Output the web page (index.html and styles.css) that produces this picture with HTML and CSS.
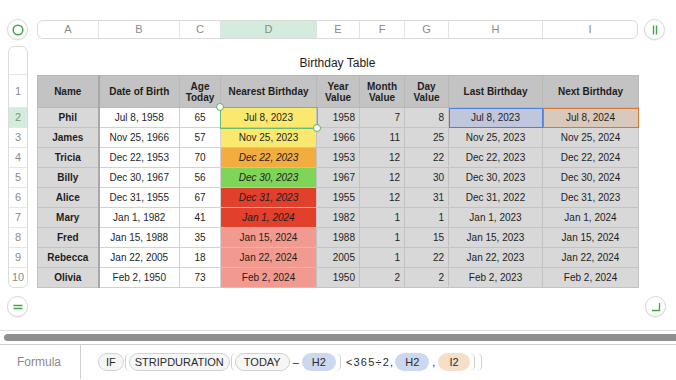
FILE: index.html
```html
<!DOCTYPE html>
<html>
<head>
<meta name="viewport" content="width=device-width, initial-scale=1">
<title>Birthday Table</title>
<link rel="stylesheet" href="styles.css">
</head>
<body>

<div class="topbar">
    <span class="knob">
        <svg width="12" height="12" viewBox="0 0 12 12"><circle cx="6" cy="6" r="4.8" fill="none" stroke="#3aa845" stroke-width="1.5"/></svg>
    </span>
    <div class="colbar">
        <div>A</div><div>B</div><div>C</div><div class="cur">D</div><div>E</div><div>F</div><div>G</div><div>H</div><div>I</div>
    </div>
    <span class="knob">
        <svg width="12" height="12" viewBox="0 0 12 12"><path d="M4.5 1.5v9M7.5 1.5v9" stroke="#3aa845" stroke-width="1.4"/></svg>
    </span>
</div>

<div class="main">
    <!-- row numbers -->
    <div class="rowhead">
        <div class="blank"></div>
        <div class="r1">1</div>
        <div class="cur">2</div>
        <div>3</div>
        <div>4</div>
        <div>5</div>
        <div>6</div>
        <div>7</div>
        <div>8</div>
        <div>9</div>
        <div>10</div>
    </div>

    <div class="sheet">
        <div class="title">Birthday Table</div>
        <table class="grid">
            <colgroup>
                <col class="w-a"><col class="w-b"><col class="w-c"><col class="w-d"><col class="w-e"><col class="w-f"><col class="w-g"><col class="w-h"><col class="w-i">
            </colgroup>
            <tr class="head">
                <th class="name">Name</th>
                <th>Date of Birth</th>
                <th>Age<br>Today</th>
                <th>Nearest Birthday</th>
                <th>Year<br>Value</th>
                <th>Month<br>Value</th>
                <th>Day<br>Value</th>
                <th>Last Birthday</th>
                <th>Next Birthday</th>
            </tr>
            <tr>
                <td class="name">Phil</td><td class="plain">Jul 8, 1958</td><td class="plain">65</td>
                <td class="yellow sel">Jul 8, 2023<span class="handle tl"></span><span class="handle br"></span></td>
                <td class="num">1958</td><td class="num">7</td><td class="num">8</td>
                <td class="ref-h">Jul 8, 2023</td><td class="ref-i">Jul 8, 2024</td>
            </tr>
            <tr>
                <td class="name">James</td><td class="plain">Nov 25, 1966</td><td class="plain">57</td>
                <td class="yellow">Nov 25, 2023</td>
                <td class="num">1966</td><td class="num">11</td><td class="num">25</td>
                <td>Nov 25, 2023</td><td>Nov 25, 2024</td>
            </tr>
            <tr>
                <td class="name">Tricia</td><td class="plain">Dec 22, 1953</td><td class="plain">70</td>
                <td class="orange it">Dec 22, 2023</td>
                <td class="num">1953</td><td class="num">12</td><td class="num">22</td>
                <td>Dec 22, 2023</td><td>Dec 22, 2024</td>
            </tr>
            <tr>
                <td class="name">Billy</td><td class="plain">Dec 30, 1967</td><td class="plain">56</td>
                <td class="green it">Dec 30, 2023</td>
                <td class="num">1967</td><td class="num">12</td><td class="num">30</td>
                <td>Dec 30, 2023</td><td>Dec 30, 2024</td>
            </tr>
            <tr>
                <td class="name">Alice</td><td class="plain">Dec 31, 1955</td><td class="plain">67</td>
                <td class="red it">Dec 31, 2023</td>
                <td class="num">1955</td><td class="num">12</td><td class="num">31</td>
                <td>Dec 31, 2022</td><td>Dec 31, 2023</td>
            </tr>
            <tr>
                <td class="name">Mary</td><td class="plain">Jan 1, 1982</td><td class="plain">41</td>
                <td class="red it">Jan 1, 2024</td>
                <td class="num">1982</td><td class="num">1</td><td class="num">1</td>
                <td>Jan 1, 2023</td><td>Jan 1, 2024</td>
            </tr>
            <tr>
                <td class="name">Fred</td><td class="plain">Jan 15, 1988</td><td class="plain">35</td>
                <td class="salmon">Jan 15, 2024</td>
                <td class="num">1988</td><td class="num">1</td><td class="num">15</td>
                <td>Jan 15, 2023</td><td>Jan 15, 2024</td>
            </tr>
            <tr>
                <td class="name">Rebecca</td><td class="plain">Jan 22, 2005</td><td class="plain">18</td>
                <td class="salmon">Jan 22, 2024</td>
                <td class="num">2005</td><td class="num">1</td><td class="num">22</td>
                <td>Jan 22, 2023</td><td>Jan 22, 2024</td>
            </tr>
            <tr>
                <td class="name">Olivia</td><td class="plain">Feb 2, 1950</td><td class="plain">73</td>
                <td class="salmon">Feb 2, 2024</td>
                <td class="num">1950</td><td class="num">2</td><td class="num">2</td>
                <td>Feb 2, 2023</td><td>Feb 2, 2024</td>
            </tr>
        </table>
    </div>
</div>

<div class="knobs">
    <span class="knob">
        <svg width="12" height="12" viewBox="0 0 12 12"><path d="M1.5 4.5h9M1.5 7.5h9" stroke="#3aa845" stroke-width="1.3"/></svg>
    </span>
    <span class="knob">
        <svg width="12" height="12" viewBox="0 0 12 12"><path d="M9.5 2v7.5H2" fill="none" stroke="#3aa845" stroke-width="1.3"/></svg>
    </span>
</div>

<div class="hscroll"><div class="thumb"></div></div>

<div class="formula">
    <div class="label">Formula</div>
    <div class="tokens">
        <span class="fn short">IF</span><span class="open"></span>
        <span class="fn">STRIPDURATION</span><span class="open"></span>
        <span class="fn wide">TODAY</span>
        <span class="op">–</span>
        <span class="ref blue">H2</span><span class="close"></span>
        <span class="op spaced">&lt;365÷2,</span>
        <span class="ref blue">H2</span>
        <span class="op">,</span>
        <span class="ref tan">I2</span><span class="close"></span><span class="close"></span>
    </div>
</div>

</body>
</html>
```

FILE: styles.css
```css
body {
    margin: 0;
    font-family: "Liberation Sans", Arial, Helvetica, sans-serif;
    color: #1e1e1e;
    background: #fff;
    width: 676px;
    height: 380px;
    overflow: hidden;
}

/* Round buttons in the corners */
.knob {
    width: 21px;
    height: 21px;
    border: 1px solid #d6d6d6;
    border-radius: 50%;
    display: flex;
    align-items: center;
    justify-content: center;
    background: #fff;
    box-shadow: 0 1px 1px rgba(0,0,0,0.06);
    box-sizing: border-box;
}

/* Column letters */
.topbar {
    display: flex;
    align-items: center;
    padding: 19px 0 0 7px;
    gap: 9px;
}

.colbar {
    display: grid;
    grid-template-columns: 60px 81px 41px 96px 43px 45px 44px 94px 95px;
    height: 17px;
    border: 1px solid #dadada;
    border-radius: 6px;
    overflow: hidden;
    margin-right: -3px;
}

.colbar div {
    border-left: 1px solid #e2e2e2;
    font-size: 11px;
    color: #8a8a8a;
    text-align: center;
    line-height: 17px;
}

.colbar div:first-child {
    border-left: none;
}

.colbar .cur {
    background-color: #d4ecdc;
}

/* Row numbers + sheet */
.main {
    display: flex;
    margin-top: 6px;
    padding-left: 8px;
    gap: 9px;
}

.rowhead {
    width: 18px;
    border: 1px solid #dcdcdc;
    border-radius: 6px;
    overflow: hidden;
    align-self: flex-start;
}

.rowhead div {
    height: 20px;
    border-top: 1px solid #e6e6e6;
    box-sizing: border-box;
    font-size: 11px;
    color: #8a8a8a;
    text-align: center;
    line-height: 19px;
}

.rowhead .blank {
    height: 27px;
    border-top: none;
}

.rowhead .r1 {
    height: 33px;
    line-height: 32px;
}

.rowhead .cur {
    background-color: #d4ecdc;
}

.sheet {
    width: 601px;
}

.title {
    height: 29px;
    line-height: 34px;
    text-align: center;
    font-size: 12px;
}

/* The table */
.grid {
    border-collapse: collapse;
    table-layout: fixed;
    width: 601px;
    font-size: 10px;
}

.w-a { width: 61px; }
.w-b { width: 81px; }
.w-c { width: 41px; }
.w-d { width: 96px; }
.w-e { width: 43px; }
.w-f { width: 45px; }
.w-g { width: 44px; }
.w-h { width: 94px; }
.w-i { width: 96px; }

.grid th, .grid td {
    border: 1px solid #c3c3c3;
    padding: 0 4px;
    text-align: center;
    white-space: nowrap;
    background-color: #d8d8d8;
}

.grid tr {
    height: 20px;
}

.grid tr.head {
    height: 32px;
}

.grid th {
    background-color: #c3c3c3;
    border-color: #b8b8b8;
    font-weight: bold;
    line-height: 11px;
}

.grid .name {
    font-weight: bold;
    border-right: 2px solid #a8a8a8;
}

.grid .plain {
    background-color: #fff;
    border-color: #d2d2d2;
}

.grid .num {
    text-align: right;
}

.grid .it { font-style: italic; }

.grid .yellow { background-color: #fbe86f; }
.grid .orange { background-color: #f3ad3e; }
.grid .green  { background-color: #7ed557; }
.grid .red    { background-color: #e0402c; }
.grid .salmon { background-color: #f29a8f; }

.grid .ref-h {
    background-color: #c0c7dc;
    outline: 1.5px solid #4c7fdf;
    outline-offset: -1px;
}

.grid .ref-i {
    background-color: #d8c9ba;
    outline: 1.5px solid #d2793a;
    outline-offset: -1px;
}

.grid .sel {
    position: relative;
    outline: 1.5px solid #6cbb6e;
    outline-offset: 0;
}

.handle {
    position: absolute;
    width: 6px;
    height: 6px;
    border: 1.3px solid #5fb262;
    border-radius: 50%;
    background: #fff;
}

.handle.tl { left: -5px; top: -5px; }
.handle.br { right: -5px; bottom: -5px; }

/* bottom buttons */
.knobs {
    display: flex;
    justify-content: space-between;
    padding: 0 10px 0 7px;
    margin-top: 8px;
}

/* horizontal scroller */
.hscroll {
    margin-top: 13px;
    border-top: 1px solid #dcdcdc;
    border-bottom: 1px solid #cfcfcf;
    padding: 3px 0 3px 4px;
}

.thumb {
    height: 7px;
    background-color: #8f8f8f;
    border-radius: 4px 0 0 4px;
}

/* formula bar */
.formula {
    display: flex;
    height: 34px;
}

.formula .label {
    width: 63px;
    padding-left: 17px;
    border-right: 1px solid #cfcfcf;
    font-size: 12px;
    color: #8a8a8a;
    line-height: 34px;
}

.tokens {
    display: flex;
    align-items: center;
    padding-left: 17px;
    font-size: 11px;
    color: #2a2a2a;
}

.fn {
    height: 18px;
    line-height: 17px;
    padding: 0 5px;
    border: 1px solid #d2d2d2;
    border-radius: 9px;
    background-color: #f6f6f6;
    box-sizing: border-box;
}

.fn.short { padding: 0 7px; }
.fn.wide { padding: 0 8px; }

.open, .close {
    width: 5px;
    height: 18px;
    box-sizing: border-box;
}

.open {
    border-left: 1px solid #cfcfcf;
    border-radius: 9px 0 0 9px;
    margin: 0 -1px 0 1px;
}

.close {
    border-right: 1px solid #cfcfcf;
    border-radius: 0 9px 9px 0;
    margin-right: 2px;
}

.op {
    padding: 0 3px;
}

.op.spaced {
    letter-spacing: 1.2px;
    padding: 0 1px 0 3px;
}

.ref {
    height: 18px;
    line-height: 18px;
    padding: 0 10px;
    border-radius: 9px;
}

.ref.tan { padding: 0 11px; }

.ref.blue { background-color: #ccd8f0; }
.ref.tan { background-color: #f5dfc9; }
```
